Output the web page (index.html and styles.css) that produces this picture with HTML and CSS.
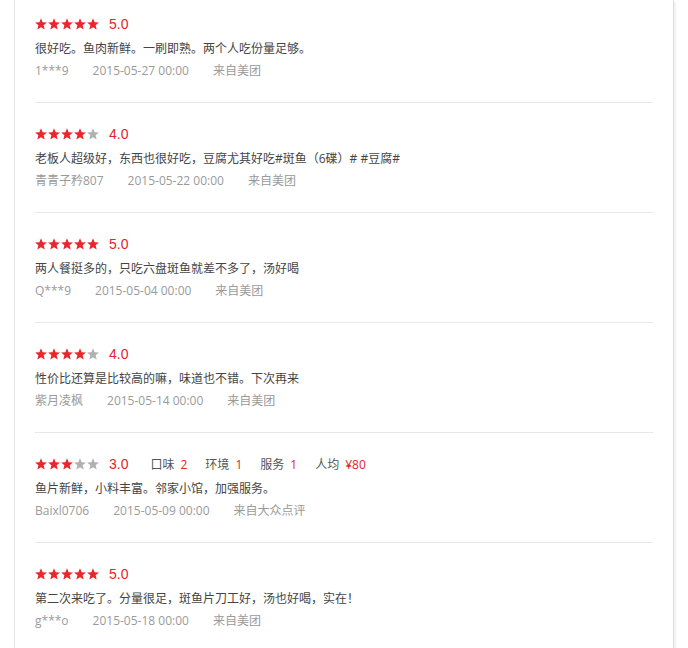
FILE: index.html
```html
<!DOCTYPE html>
<html lang="zh-CN">
    <head>
        <meta charset="utf-8">
        <title>评价</title>
        <meta name="viewport" content="width=device-width,initial-scale=1">
        <link rel="stylesheet" href="styles.css">
    </head>
    <body>
        <svg width="0" height="0" class="defs">
            <defs>
                <path id="star" d="M6 0.3 L7.6 4.2 L11.9 4.5 L8.6 7.3 L9.7 11.5 L6 9.2 L2.3 11.5 L3.4 7.3 L0.1 4.5 L4.4 4.2 Z"/>
            </defs>
        </svg>
        <main class="reviews">
            <div class="review">
                <div class="rate">
                    <span class="stars">
                        <svg class="on"><use href="#star"/></svg><svg class="on"><use href="#star"/></svg><svg class="on"><use href="#star"/></svg><svg class="on"><use href="#star"/></svg><svg class="on"><use href="#star"/></svg>
                    </span>
                    <span class="score">5.0</span>
                </div>
                <p class="text">很好吃。鱼肉新鲜。一刷即熟。两个人吃份量足够。</p>
                <div class="meta">
                    <span>1***9</span><span>2015-05-27 00:00</span><span>来自美团</span>
                </div>
            </div>

            <div class="review">
                <div class="rate">
                    <span class="stars">
                        <svg class="on"><use href="#star"/></svg><svg class="on"><use href="#star"/></svg><svg class="on"><use href="#star"/></svg><svg class="on"><use href="#star"/></svg><svg class="off"><use href="#star"/></svg>
                    </span>
                    <span class="score">4.0</span>
                </div>
                <p class="text">老板人超级好，东西也很好吃，豆腐尤其好吃#斑鱼（6碟）# #豆腐#</p>
                <div class="meta">
                    <span>青青子矜807</span><span>2015-05-22 00:00</span><span>来自美团</span>
                </div>
            </div>

            <div class="review">
                <div class="rate">
                    <span class="stars">
                        <svg class="on"><use href="#star"/></svg><svg class="on"><use href="#star"/></svg><svg class="on"><use href="#star"/></svg><svg class="on"><use href="#star"/></svg><svg class="on"><use href="#star"/></svg>
                    </span>
                    <span class="score">5.0</span>
                </div>
                <p class="text">两人餐挺多的，只吃六盘斑鱼就差不多了，汤好喝</p>
                <div class="meta">
                    <span>Q***9</span><span>2015-05-04 00:00</span><span>来自美团</span>
                </div>
            </div>

            <div class="review">
                <div class="rate">
                    <span class="stars">
                        <svg class="on"><use href="#star"/></svg><svg class="on"><use href="#star"/></svg><svg class="on"><use href="#star"/></svg><svg class="on"><use href="#star"/></svg><svg class="off"><use href="#star"/></svg>
                    </span>
                    <span class="score">4.0</span>
                </div>
                <p class="text">性价比还算是比较高的嘛，味道也不错。下次再来</p>
                <div class="meta">
                    <span>紫月凌枫</span><span>2015-05-14 00:00</span><span>来自美团</span>
                </div>
            </div>

            <div class="review">
                <div class="rate">
                    <span class="stars">
                        <svg class="on"><use href="#star"/></svg><svg class="on"><use href="#star"/></svg><svg class="on"><use href="#star"/></svg><svg class="off"><use href="#star"/></svg><svg class="off"><use href="#star"/></svg>
                    </span>
                    <span class="score">3.0</span>
                    <span class="sub">口味<em>2</em></span>
                    <span class="sub">环境<em>1</em></span>
                    <span class="sub">服务<em>1</em></span>
                    <span class="sub">人均<em>¥80</em></span>
                </div>
                <p class="text">鱼片新鲜，小料丰富。邻家小馆，加强服务。</p>
                <div class="meta">
                    <span>Baixl0706</span><span>2015-05-09 00:00</span><span>来自大众点评</span>
                </div>
            </div>

            <div class="review">
                <div class="rate">
                    <span class="stars">
                        <svg class="on"><use href="#star"/></svg><svg class="on"><use href="#star"/></svg><svg class="on"><use href="#star"/></svg><svg class="on"><use href="#star"/></svg><svg class="on"><use href="#star"/></svg>
                    </span>
                    <span class="score">5.0</span>
                </div>
                <p class="text">第二次来吃了。分量很足，斑鱼片刀工好，汤也好喝，实在！</p>
                <div class="meta">
                    <span>g***o</span><span>2015-05-18 00:00</span><span>来自美团</span>
                </div>
            </div>
        </main>
    </body>
</html>
```

FILE: styles.css
```css
body {
    margin: 0;
    background-color: #fff;
    font-family: "Open Sans", "Noto Sans CJK SC", sans-serif;
    font-size: 12px;
}

.defs {
    position: absolute;
}

.reviews {
    width: 618px;
    min-height: 648px;
    margin-left: 14px;
    padding: 0 20px;
    border-left: 1px solid #e3e3e3;
    border-right: 1px solid #dcdcdc;
    box-shadow: 4px 0 2px -2px #f2f2f2;
}

.review {
    padding: 21px 0 20px;
    border-bottom: 1px solid #e8e8e8;
}
.review:first-child {
    padding-top: 14px;
}

.rate {
    display: flex;
    align-items: center;
    height: 20px;
}

.stars {
    display: flex;
    gap: 1px;
}
.stars svg {
    width: 12px;
    height: 12px;
}
.stars svg.on {
    fill: #e9262b;
}
.stars svg.off {
    fill: #b0b0b0;
}

.score {
    margin-left: 10px;
    margin-right: 4px;
    font-family: "Liberation Sans", "Noto Sans CJK SC", sans-serif;
    font-size: 14px;
    color: #e5232a;
}

.sub {
    margin-left: 18px;
    font-size: 12px;
    color: #555;
}
.sub em {
    margin-left: 6px;
    font-style: normal;
    color: #e5232a;
}

.text {
    margin: 4px 0 0;
    line-height: 22px;
    color: #444;
}

.meta {
    display: flex;
    gap: 24px;
    line-height: 22px;
    color: #9a9a9a;
}
```
